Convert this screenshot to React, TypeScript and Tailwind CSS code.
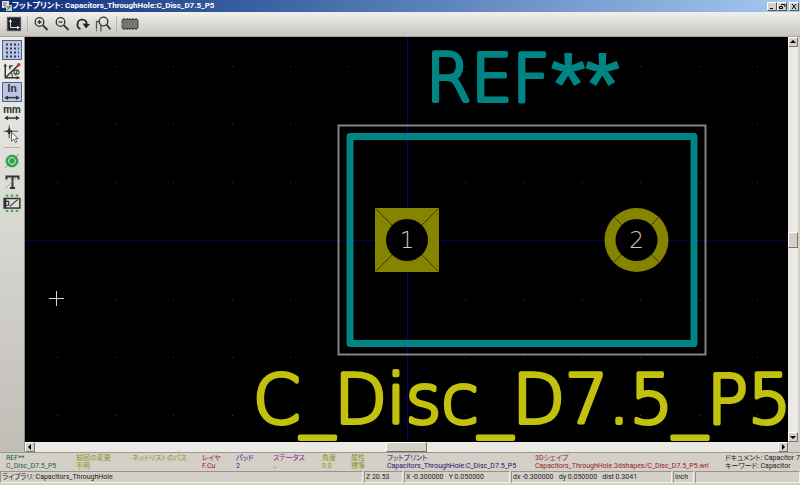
import type { ReactNode } from 'react';

const GRID_X = [32, 90, 148, 207, 265, 323, 440, 499, 557, 615, 674, 732];
const GRID_Y = [29, 87, 145, 262, 320, 378];

const infoFields = [
  { label: 'REF**', value: 'C_Disc_D7.5_P5', color: 'text-[#14604f]', width: 'w-[70px]' },
  { label: '前回の変更', value: '不明', color: 'text-[#90901c]', width: 'w-[56px]' },
  { label: 'ネットリストのパス', value: '', color: 'text-[#90901c]', width: 'w-[70px]' },
  { label: 'レイヤ', value: 'F.Cu', color: 'text-[#961c1c]', width: 'w-[34px]' },
  { label: 'パッド', value: '2', color: 'text-[#1c1c96]', width: 'w-[37px]' },
  { label: 'ステータス', value: '..', color: 'text-[#961c96]', width: 'w-[49px]' },
  { label: '角度', value: '0.0', color: 'text-[#90901c]', width: 'w-[29px]' },
  { label: '属性', value: '標準', color: 'text-[#90901c]', width: 'w-[36px]' },
  { label: 'フットプリント', value: 'Capacitors_ThroughHole:C_Disc_D7.5_P5', color: 'text-[#16166e]', width: 'w-[148px]' },
  { label: '3Dシェイプ', value: 'Capacitors_ThroughHole.3dshapes/C_Disc_D7.5_P5.wrl', color: 'text-[#961c1c]', width: 'grow' },
  { label: 'ドキュメント: Capacitor 7', value: 'キーワード: Capacitor', color: 'text-[#222222]', width: 'w-[75px]' },
];

function Icon({ children, size = 'size-4' }: { children: ReactNode; size?: string }) {
  return (
    <svg viewBox="0 0 16 16" className={`${size} shrink-0`} fill="none" stroke="#333" strokeWidth="1.3" aria-hidden="true">
      {children}
    </svg>
  );
}

function ToolButton({ label, active, children }: { label: string; active?: boolean; children: ReactNode }) {
  return (
    <button
      type="button"
      aria-label={label}
      aria-pressed={active}
      className={`flex size-5 shrink-0 items-center justify-center border ${
        active ? 'border-[#4a5f9c] bg-[#bcc6e0]' : 'border-transparent'
      }`}
    >
      {children}
    </button>
  );
}

function WindowButton({ label, children }: { label: string; children: ReactNode }) {
  return (
    <button
      type="button"
      aria-label={label}
      className="flex h-[9px] w-[10px] items-center justify-center border border-t-white border-l-white border-r-[#55534e] border-b-[#55534e] bg-[#d4d0c8]"
    >
      <svg viewBox="0 0 8 7" className="h-[7px] w-2 shrink-0" fill="none" stroke="#000" aria-hidden="true">
        {children}
      </svg>
    </button>
  );
}

function ScrollArrow({ label, points }: { label: string; points: string }) {
  return (
    <button
      type="button"
      aria-label={label}
      className="flex size-[10px] shrink-0 items-center justify-center border border-t-white border-l-white border-r-[#77746c] border-b-[#77746c] bg-[#d4d0c8]"
    >
      <svg viewBox="0 0 8 8" className="size-2 shrink-0" aria-hidden="true">
        <polygon points={points} fill="#000" />
      </svg>
    </button>
  );
}

function TitleBar() {
  return (
    <header className="flex h-3 shrink-0 items-center bg-linear-to-r from-[#0f2f7c] to-[#a6caf0] pr-px pl-[2px]">
      <svg viewBox="0 0 10 10" className="size-[10px] shrink-0" aria-hidden="true">
        <rect x="0" y="0" width="7" height="7" fill="#dfe6dd" />
        <path d="M1 2h4M1 4h3M2 6h3" stroke="#9b4a5c" />
        <rect x="4" y="4" width="6" height="6" fill="#b8d2bd" />
        <path d="M5 9l4-4M5 6h3" stroke="#3d7a50" />
      </svg>
      <h1 className="grow truncate text-[8px] leading-3 font-bold text-white">
        フットプリント: Capacitors_ThroughHole:C_Disc_D7.5_P5
      </h1>
      <div className="flex">
        <WindowButton label="Minimize">
          <path d="M2 5.5h3" />
        </WindowButton>
        <WindowButton label="Restore">
          <path d="M3 1.5h4v2.5M1.5 3.5h3v2h-3z" />
        </WindowButton>
        <div className="w-[2px]" />
        <WindowButton label="Close">
          <path d="M2 1l4 5M6 1l-4 5" />
        </WindowButton>
      </div>
    </header>
  );
}

function TopToolbar() {
  return (
    <div className="flex h-[25px] shrink-0 items-center border-b border-[#a9a69f] bg-linear-to-b from-[#f1f0ed] to-[#c8c5be] pl-1">
      <ToolButton label="Options">
        <Icon>
          <rect x="1.5" y="1.5" width="13" height="13" fill="#1c222b" stroke="#555" />
          <path d="M4.5 5v6.5h7" stroke="#ddd" strokeWidth="1" />
          <path d="M3 6l1.5-3L6 6zM11 10l3 1.5-3 1.5z" fill="#fff" stroke="none" />
        </Icon>
      </ToolButton>
      <div className="mx-[3px] h-4 w-px bg-[#bab7b0]" />
      <ToolButton label="Zoom in">
        <Icon>
          <circle cx="6.5" cy="6" r="4.3" />
          <path d="M4.5 6h4M6.5 4v4" />
          <path d="M9.7 9.2l4.8 4.8" strokeWidth="1.8" />
        </Icon>
      </ToolButton>
      <div className="w-px" />
      <ToolButton label="Zoom out">
        <Icon>
          <circle cx="6.5" cy="6" r="4.3" />
          <path d="M4.5 6h4" />
          <path d="M9.7 9.2l4.8 4.8" strokeWidth="1.8" />
        </Icon>
      </ToolButton>
      <div className="w-px" />
      <ToolButton label="Redraw">
        <Icon>
          <path d="M5.5 13C1 11.5 1.500 4 7 3.500c3.500 0 5 2.500 4.500 5.500" strokeWidth="1.700" stroke="#222" />
          <path d="M7.500 7.500l7.500 0.500-4 4.500z" fill="#222" stroke="none" />
        </Icon>
      </ToolButton>
      <ToolButton label="Zoom to fit">
        <Icon>
          <path d="M1.5 13V5.5h3M6 9v6.5M1 14.5h1" stroke="#555" />
          <circle cx="8.5" cy="5.5" r="4.3" />
          <path d="M11.5 8.5l4 5" strokeWidth="1.8" />
        </Icon>
      </ToolButton>
      <div className="mx-[3px] h-4 w-px bg-[#bab7b0]" />
      <button type="button" aria-label="Insert in board" className="flex h-5 w-5 items-center justify-center">
        <svg viewBox="0 0 18 14" className="h-[14px] w-[18px]" aria-hidden="true">
          <path d="M3 1v12M6 1v12M9 1v12M12 1v12M15 1v12" stroke="#555" strokeWidth="1.5" />
          <rect x="1" y="2.5" width="16" height="9" rx="1" fill="#747474" stroke="#444" />
          <path d="M1 5.500a1.500 1.500 0 0 1 0 3" fill="#ccc" stroke="#444" />
        </svg>
      </button>
    </div>
  );
}

function SideToolbar() {
  return (
    <div className="flex w-[25px] shrink-0 flex-col items-center gap-px border-r border-[#8e8c88] bg-linear-to-b from-[#eeede9] to-[#c0bdb7] pt-[3px]">
      <ToolButton label="Grid" active>
        <Icon>
          <path d="M2 2.5h13M2 6.5h13M2 10.5h13M2 14.5h13" strokeDasharray="2 2" strokeWidth="2" stroke="#333c58" />
        </Icon>
      </ToolButton>
      <ToolButton label="Polar coordinates">
        <Icon size="size-[18px]">
          <path d="M2 3v11h11M2 14L13.5 3" />
          <path d="M.5 4L2 1l1.5 3zM12 12.5l3.5 1.5-3.5 1.5z" fill="#333" stroke="none" />
          <path d="M6 6.5V3M6 4.5q1-1.5 2.5-1" />
          <ellipse cx="12" cy="9" rx="2.3" ry="1.8" stroke="#444" strokeWidth="1" />
          <path d="M13 6.5l-2 5.5M7 9.5q2 2 1 4" stroke="#444" strokeWidth="1" />
          <circle cx="14" cy="2.5" r="1.6" fill="#c33" stroke="none" />
        </Icon>
      </ToolButton>
      <ToolButton label="Inches" active>
        <Icon size="size-[18px]">
          <text x="8" y="8" textAnchor="middle" fontSize="10" fontWeight="bold" fill="#333c50" stroke="none">In</text>
          <path d="M3 13h10" />
          <path d="M1 13l3.5-2v4zM15 13l-3.5-2v4z" fill="#333" stroke="none" />
        </Icon>
      </ToolButton>
      <ToolButton label="Millimeters">
        <Icon size="size-[18px]">
          <text x="8" y="8" textAnchor="middle" fontSize="9" fontWeight="bold" fill="#333" stroke="none">mm</text>
          <path d="M3 12.5h10" />
          <path d="M1 12.5l3.5-2v4zM15 12.5l-3.5-2v4z" fill="#333" stroke="none" />
        </Icon>
      </ToolButton>
      <ToolButton label="Cursor shape">
        <Icon size="size-[18px]">
          <path d="M.5 5.5h13M5.5 .5v11" strokeWidth="1" stroke="#555" />
          <path d="M3 5.5h5M5.5 3v5" strokeWidth="1.8" />
          <path d="M7.5 6.5v8l2-2 1.5 3 1.3-.6L11 12h2.5z" fill="#fff" stroke="#555" strokeWidth=".8" />
        </Icon>
      </ToolButton>
      <div className="my-0.5 h-px w-4 shrink-0 bg-[#b8b5ae]" />
      <ToolButton label="Pad sketch">
        <Icon>
          <circle cx="8" cy="8" r="6" fill="#2fa84a" stroke="#2b9443" strokeWidth=".8" />
          <circle cx="8" cy="8" r="3.4" stroke="#d8eedb" strokeWidth="1" />
          <path d="M1 15L15 1" stroke="#777" strokeWidth=".8" />
        </Icon>
      </ToolButton>
      <ToolButton label="Text sketch">
        <Icon>
          <path d="M2.5 5.5V2.5h12v3M8.5 2.5v11M6 14h5" strokeWidth="2" />
          <path d="M1 15L13 3" stroke="#999" strokeWidth=".8" />
        </Icon>
      </ToolButton>
      <ToolButton label="Edge sketch">
        <Icon size="size-[18px]">
          <path d="M2.5 1.5h11M2.5 15h11" stroke="#35b252" strokeWidth="2" strokeDasharray="2.2 2.2" />
          <rect x="1" y="4" width="14" height="8.5" fill="#deded8" strokeWidth="1.3" />
          <path d="M2 3.5v9" strokeWidth="2" />
          <path d="M2 6.5h3v3.5H2M6 11l7-6" strokeWidth="1" />
        </Icon>
      </ToolButton>
    </div>
  );
}

function FootprintCanvas() {
  return (
    <svg
      viewBox="0 0 763 405"
      preserveAspectRatio="xMidYMid slice"
      className="h-full min-w-0 flex-1 bg-black"
      role="img"
      aria-label="C_Disc_D7.5_P5"
    >
      {GRID_Y.map(y => GRID_X.map(x => <rect key={`${x}-${y}`} x={x} y={y} width="1" height="1" fill="#3c3c3c" />))}

      {/* Axes */}
      <rect x="0" y="203" width="763" height="1" fill="#00005a" />
      <rect x="382" y="0" width="1" height="405" fill="#000084" />

      {/* Courtyard and silkscreen */}
      <rect x="313.5" y="88.5" width="367" height="229" fill="none" stroke="#848484" strokeWidth="2" />
      <rect x="325" y="99.5" width="344" height="207" fill="none" stroke="#008484" strokeWidth="7" strokeLinejoin="round" />

      {/* Pad 1 */}
      <rect x="350" y="171" width="64" height="64" fill="#848400" />
      <path d="M350.5 171.5l63 63M413.5 171.5l-63 63" stroke="#3c3c10" />
      <circle cx="382" cy="203" r="21" fill="#000" />

      {/* Pad 2 */}
      <path d="M580 171l64 64M644 171l-64 64" stroke="#000030" />
      <circle cx="611.5" cy="203" r="32" fill="#848400" />
      <path d="M589 180l45 45M634 180l-45 45" stroke="#3c3c10" />
      <circle cx="611.5" cy="203" r="21" fill="#000" />

      <g className="font-['DejaVu_Sans']" fontSize="23" fontWeight="200" fill="#c8c8c8" textAnchor="middle">
        <text x="382" y="211">1</text>
        <text x="611.5" y="211">2</text>
      </g>

      <g className="font-['DejaVu_Sans']" fontWeight="200" strokeWidth="4" strokeLinejoin="round">
        <text x="401" y="64" fontSize="65" fill="#008484" stroke="#008484">REF</text>
        <text x="526" y="77" fontSize="88" strokeWidth="2" className="font-['Liberation_Sans']" fill="#008484" stroke="#008484">**</text>
        <text x="228" y="386" fontSize="68" fill="#c2c20e" stroke="#c2c20e">C_Disc_D7.5_P5</text>
      </g>

      {/* Cursor */}
      <path d="M24 261.5h15M31.5 254v15" stroke="#d8d8d8" />
    </svg>
  );
}

function StatusCell({ className, children }: { className: string; children?: ReactNode }) {
  return (
    <div className={`truncate border border-t-[#96938c] border-l-[#96938c] border-r-[#f4f2ee] border-b-[#f4f2ee] pl-px whitespace-pre ${className}`}>
      {children}
    </div>
  );
}

export default function App() {
  return (
    <div className="flex h-screen flex-col overflow-hidden bg-[#d4d0c8] font-['Roboto','Noto_Sans_CJK_JP',sans-serif] text-[7px] leading-2 text-[#222] [font-feature-settings:'palt']">
      <TitleBar />
      <TopToolbar />

      <main className="flex min-h-0 flex-1">
        <SideToolbar />
        <div className="flex min-w-0 flex-1 flex-col">
          <div className="flex min-h-0 flex-1">
            <FootprintCanvas />
            <div className="flex w-[10px] shrink-0 flex-col bg-[#ebe9e4]">
              <ScrollArrow label="Scroll up" points="4,2 7,5 1,5" />
              <div className="flex-1" />
              <div className="h-4 border border-t-white border-l-white border-r-[#77746c] border-b-[#77746c] bg-[#d4d0c8]" />
              <div className="flex-1" />
              <ScrollArrow label="Scroll down" points="4,6 7,3 1,3" />
            </div>
          </div>
          <div className="flex h-[10px] shrink-0 bg-[#d4d0c8] pr-[10px]">
            <ScrollArrow label="Scroll left" points="2,4 5,1 5,7" />
            <div className="flex-1 bg-[#ebe9e4]" />
            <div className="w-[41px] border border-t-white border-l-white border-r-[#77746c] border-b-[#77746c] bg-[#d4d0c8]" />
            <div className="flex-1 bg-[#ebe9e4]" />
            <ScrollArrow label="Scroll right" points="6,4 3,1 3,7" />
          </div>
        </div>
        <div className="w-[2px] shrink-0 bg-[#d4d0c8]" />
      </main>

      <section className="flex h-[18px] shrink-0 overflow-hidden border-t border-[#9b9890] pt-px pl-[6px]">
        {infoFields.map(field => (
          <div key={field.label} className={`shrink-0 whitespace-nowrap ${field.width} ${field.color}`}>
            <p>{field.label}</p>
            <p>{field.value}</p>
          </div>
        ))}
      </section>

      <footer className="flex h-[15px] shrink-0 gap-px pt-px pb-[2px] leading-[10px]">
        <StatusCell className="min-w-0 flex-1">ライブラリ: Capacitors_ThroughHole</StatusCell>
        <StatusCell className="w-[39px]">Z 20.53</StatusCell>
        <StatusCell className="w-[106px]">X -0.300000   Y 0.050000</StatusCell>
        <StatusCell className="w-[161px]">dx -0.300000   dy 0.050000   dist 0.3041</StatusCell>
        <StatusCell className="w-[21px]">inch</StatusCell>
        <StatusCell className="w-[105px]" />
      </footer>
    </div>
  );
}
